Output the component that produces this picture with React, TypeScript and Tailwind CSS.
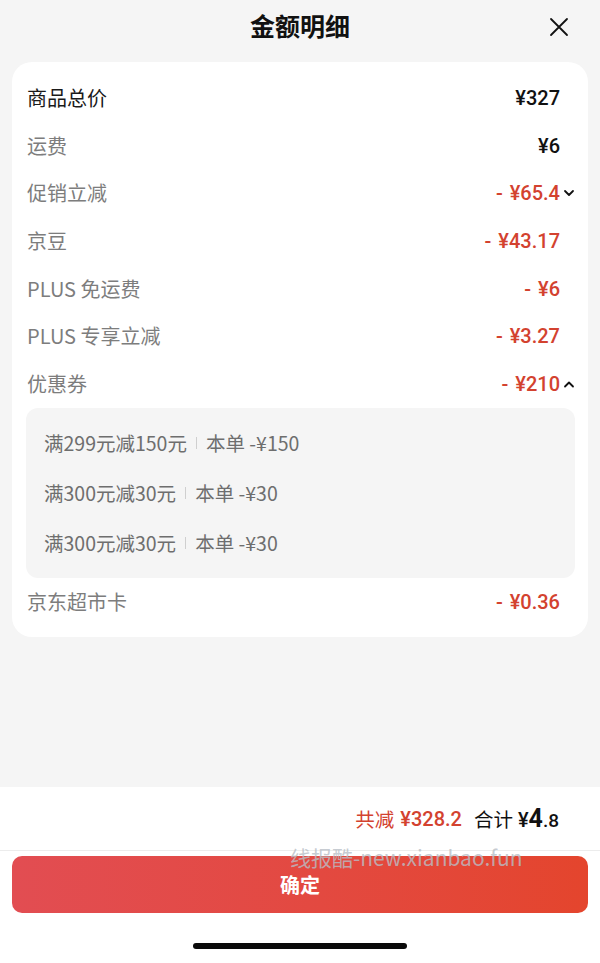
const cjk = "font-['Noto_Sans_CJK_SC',sans-serif]";
const num = "font-['Roboto','Noto_Sans_CJK_SC',sans-serif]";

function Chevron({ up }: { up?: boolean }) {
  return (
    <svg width="12" height="8" viewBox="0 0 12 8" className="ml-[3px]">
      <path
        d={up ? "M2 6.5 L6 2.5 L10 6.5" : "M2 2 L6 6 L10 2"}
        fill="none"
        stroke="#111"
        strokeWidth="1.8"
        strokeLinecap="round"
        strokeLinejoin="round"
      />
    </svg>
  );
}

function CloseIcon() {
  return (
    <svg width="20" height="20" viewBox="0 0 20 20" className="absolute right-[31px] top-[17px]">
      <path d="M2 2 L18 18 M18 2 L2 18" stroke="#111" strokeWidth="1.8" strokeLinecap="round" />
    </svg>
  );
}

type Row = { label: string; amount: string; red?: boolean; dark?: boolean; chevron?: "up" | "down" };

const rows: Row[] = [
  { label: "商品总价", amount: "¥327", dark: true },
  { label: "运费", amount: "¥6" },
  { label: "促销立减", amount: "¥65.4", red: true, chevron: "down" },
  { label: "京豆", amount: "¥43.17", red: true },
  { label: "PLUS 免运费", amount: "¥6", red: true },
  { label: "PLUS 专享立减", amount: "¥3.27", red: true },
  { label: "优惠券", amount: "¥210", red: true, chevron: "up" },
];

const coupons = [
  { name: "满299元减150元", use: "本单 -¥150" },
  { name: "满300元减30元", use: "本单 -¥30" },
  { name: "满300元减30元", use: "本单 -¥30" },
];

function AmountRow({ r }: { r: Row }) {
  return (
    <div className="flex h-[47.7px] items-center justify-between">
      <span className={`${cjk} text-[20px] ${r.dark ? "text-[#1a1a1a]" : "text-[#7d7d7d]"}`}>{r.label}</span>
      <div className="flex items-center justify-end">
        <span
          className={`${num} flex items-center text-[20px] font-medium ${r.red ? "text-[#d3422f]" : "text-[#111]"}`}
        >
          {r.red && <span className="mr-[7px]">-</span>}
          {r.amount}
        </span>
        <div className="flex w-[16px] items-center">
          {r.chevron && <Chevron up={r.chevron === "up"} />}
        </div>
      </div>
    </div>
  );
}

export default function App() {
  return (
    <div className={`${cjk} relative flex h-[963px] w-[600px] flex-col bg-[#f5f5f5]`}>
      {/* Header */}
      <div className="relative flex h-[62px] items-start justify-center pt-[7px]">
        <span className="text-[25px] font-bold leading-[36px] text-[#111]">金额明细</span>
        <CloseIcon />
      </div>

      {/* Detail card */}
      <div className="mx-[12px] rounded-[20px] bg-white pb-[11px] pl-[15px] pr-[12px] pt-[12px]">
        {rows.map((r, i) => (
          <AmountRow key={i} r={r} />
        ))}

        <div className="-ml-[1px] mr-[1px] rounded-[12px] bg-[#f5f5f5] px-[18px] py-[10px]">
          {coupons.map((c, i) => (
            <div key={i} className="flex h-[50px] items-center text-[19.5px] text-[#6e6e6e]">
              <span>{c.name}</span>
              <span className="mx-[9px] h-[12px] w-px bg-[#cfcfcf]" />
              <span>{c.use}</span>
            </div>
          ))}
        </div>

        <AmountRow r={{ label: "京东超市卡", amount: "¥0.36", red: true }} />
      </div>

      {/* Footer */}
      <div className="mt-auto h-[176px] bg-white">
        <div className="flex h-[63px] items-center justify-end pr-[41px]">
          <span className="text-[19.5px] text-[#d3422f]">共减</span>
          <span className={`${num} ml-[6px] text-[20px] font-medium text-[#d3422f]`}>¥328.2</span>
          <span className="ml-[12px] text-[19.5px] text-[#111]">合计</span>
          <span className={`${num} ml-[5px] flex items-baseline font-medium text-[#111]`}>
            <span className="text-[20px]">¥</span>
            <span className="text-[25px] font-bold">4</span>
            <span className="text-[19px]">.8</span>
          </span>
        </div>
        <div className="h-px bg-[#ececec]" />
        <div className="px-[12px] pt-[5px]">
          <button className="flex h-[57px] w-full items-center justify-center rounded-[10px] bg-gradient-to-r from-[#e24d52] to-[#e4452d] text-[20px] font-bold text-white">
            确定
          </button>
        </div>
        <div className="flex justify-center pt-[30px]">
          <div className="h-[6px] w-[214px] rounded-full bg-[#0a0a0a]" />
        </div>
      </div>

      {/* Watermark overlay */}
      <span className="pointer-events-none absolute left-[290px] top-[844px] text-[21px] leading-[26px] text-[#b8bec6]/80">
        线报酷-new.xianbao.fun
      </span>
    </div>
  );
}
